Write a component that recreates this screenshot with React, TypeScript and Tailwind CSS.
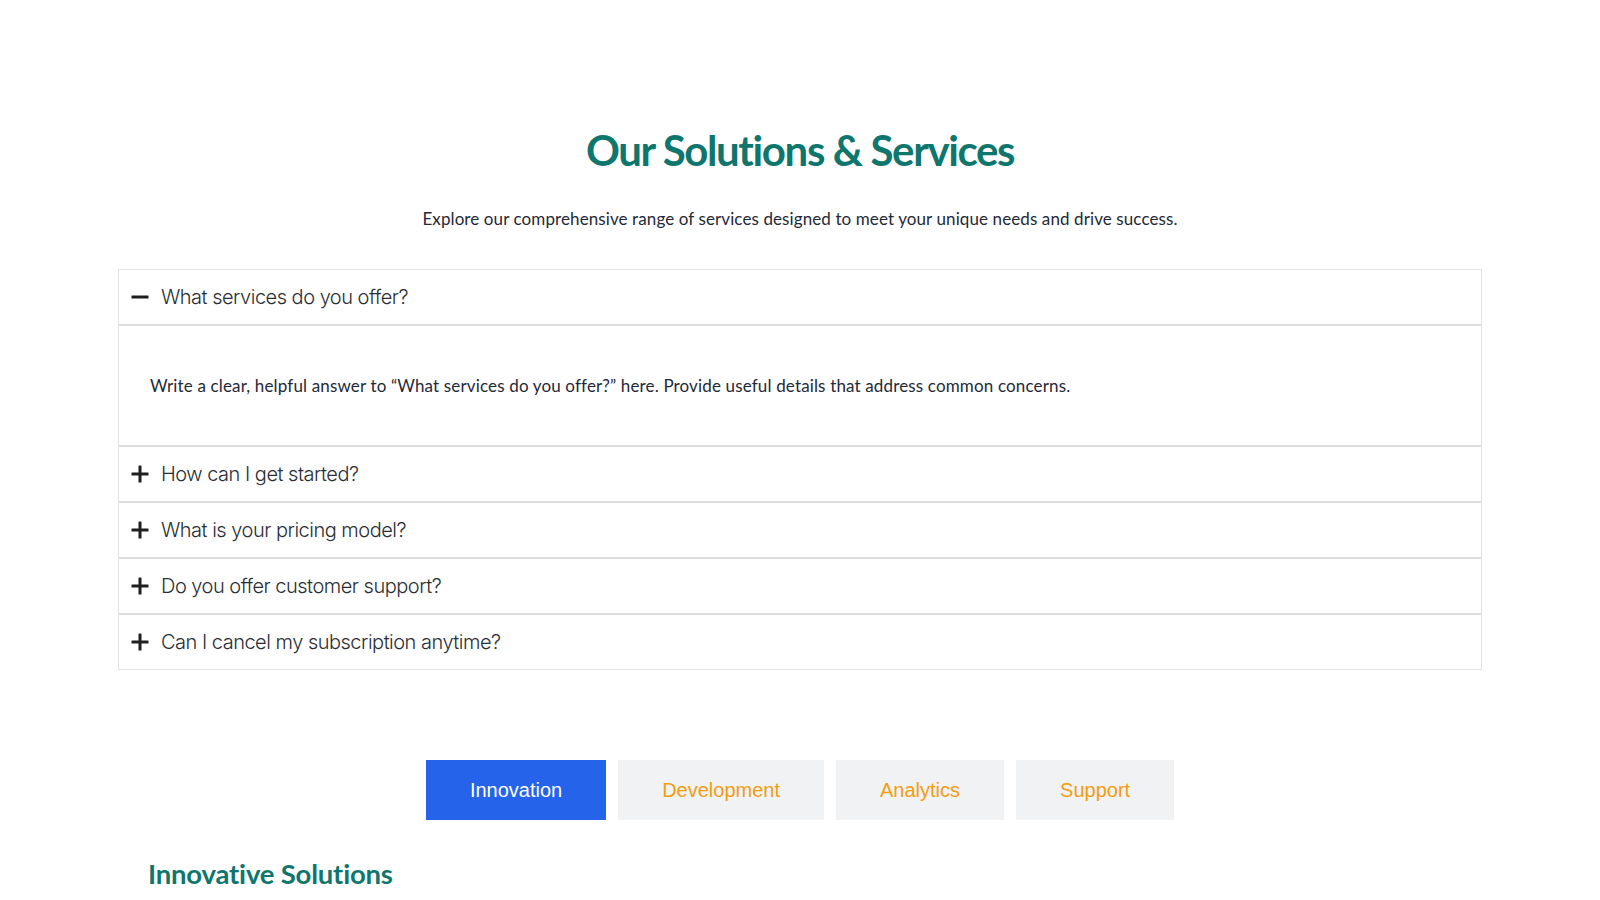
import { useState } from 'react';

const FAQS = [
  {
    q: 'What services do you offer?',
    a: 'Write a clear, helpful answer to \u201cWhat services do you offer?\u201d here. Provide useful details that address common concerns.',
  },
  { q: 'How can I get started?', a: 'Write a clear, helpful answer to \u201cHow can I get started?\u201d here.' },
  { q: 'What is your pricing model?', a: 'Write a clear, helpful answer to \u201cWhat is your pricing model?\u201d here.' },
  { q: 'Do you offer customer support?', a: 'Write a clear, helpful answer to \u201cDo you offer customer support?\u201d here.' },
  { q: 'Can I cancel my subscription anytime?', a: 'Write a clear, helpful answer to \u201cCan I cancel my subscription anytime?\u201d here.' },
];

const TABS = [
  { key: 'innovation', label: 'Innovation', title: 'Innovative Solutions' },
  { key: 'development', label: 'Development', title: 'Development Services' },
  { key: 'analytics', label: 'Analytics', title: 'Analytics & Insights' },
  { key: 'support', label: 'Support', title: 'Dedicated Support' },
];

const display = "font-['Lato','Noto_Sans',sans-serif]";

export default function App() {
  const [open, setOpen] = useState(0);
  const [tab, setTab] = useState('innovation');
  const current = TABS.find((t) => t.key === tab) ?? TABS[0];

  return (
    <div className="min-h-screen bg-white">
      <section className="mx-auto w-[1364px] pt-[121px]">
        {/* Header */}
        <h2 className={`${display} text-center text-[42px] leading-[58px] font-bold tracking-[-1.4px] text-[#0f766e]`}>
          Our Solutions &amp; Services
        </h2>
        <p className={`${display} mt-[28px] text-center text-[17px] leading-[24px] tracking-[0.1px] text-[#1f2937]`}>
          Explore our comprehensive range of services designed to meet your unique needs and drive success.
        </p>

        {/* Accordion */}
        <div className="mt-[38px] border border-[#e2e3e5]">
          {FAQS.map((item, i) => {
            const isOpen = open === i;
            return (
              <div key={item.q} className={i < FAQS.length - 1 ? 'border-b-2 border-[#dcdde1]' : ''}>
                <button
                  onClick={() => setOpen(isOpen ? -1 : i)}
                  className="flex h-[54px] w-full items-center gap-[12px] pl-[12px] text-left"
                >
                  <svg className="h-[18px] w-[18px] text-[#1f1f1f]" viewBox="0 0 18 18" fill="currentColor">
                    <rect x="0.5" y="7.5" width="17" height="3" rx="0.5" />
                    {!isOpen && <rect x="7.5" y="0.5" width="3" height="17" rx="0.5" />}
                  </svg>
                  <span className="font-['Inter',sans-serif] text-[20px] font-light tracking-[-0.5px] text-[#2a2e33]">
                    {item.q}
                  </span>
                </button>
                {isOpen && (
                  <div className="flex h-[121px] items-center border-t-2 border-[#dcdde1] px-[31px]">
                    <p className={`${display} text-[17px] tracking-[0.15px] text-[#1f2937]`}>{item.a}</p>
                  </div>
                )}
              </div>
            );
          })}
        </div>

        {/* Tabs */}
        <div className="mt-[90px] flex justify-center gap-[12px]">
          {TABS.map((t) => (
            <button
              key={t.key}
              onClick={() => setTab(t.key)}
              className={
                tab === t.key
                  ? "h-[60px] px-[44px] bg-[#2563eb] font-['Liberation_Sans',Arial,sans-serif] text-[20px] text-white"
                  : "h-[60px] px-[44px] bg-[#f1f2f4] font-['Liberation_Sans',Arial,sans-serif] text-[20px] text-[#f39c12]"
              }
            >
              {t.label}
            </button>
          ))}
        </div>

        {/* Tab content */}
        <div className="px-[30px] pt-[36px]">
          <h3 className={`${display} text-[27.5px] leading-[36px] font-bold tracking-[-0.2px] text-[#0f766e]`}>
            {current.title}
          </h3>
        </div>
      </section>
    </div>
  );
}
